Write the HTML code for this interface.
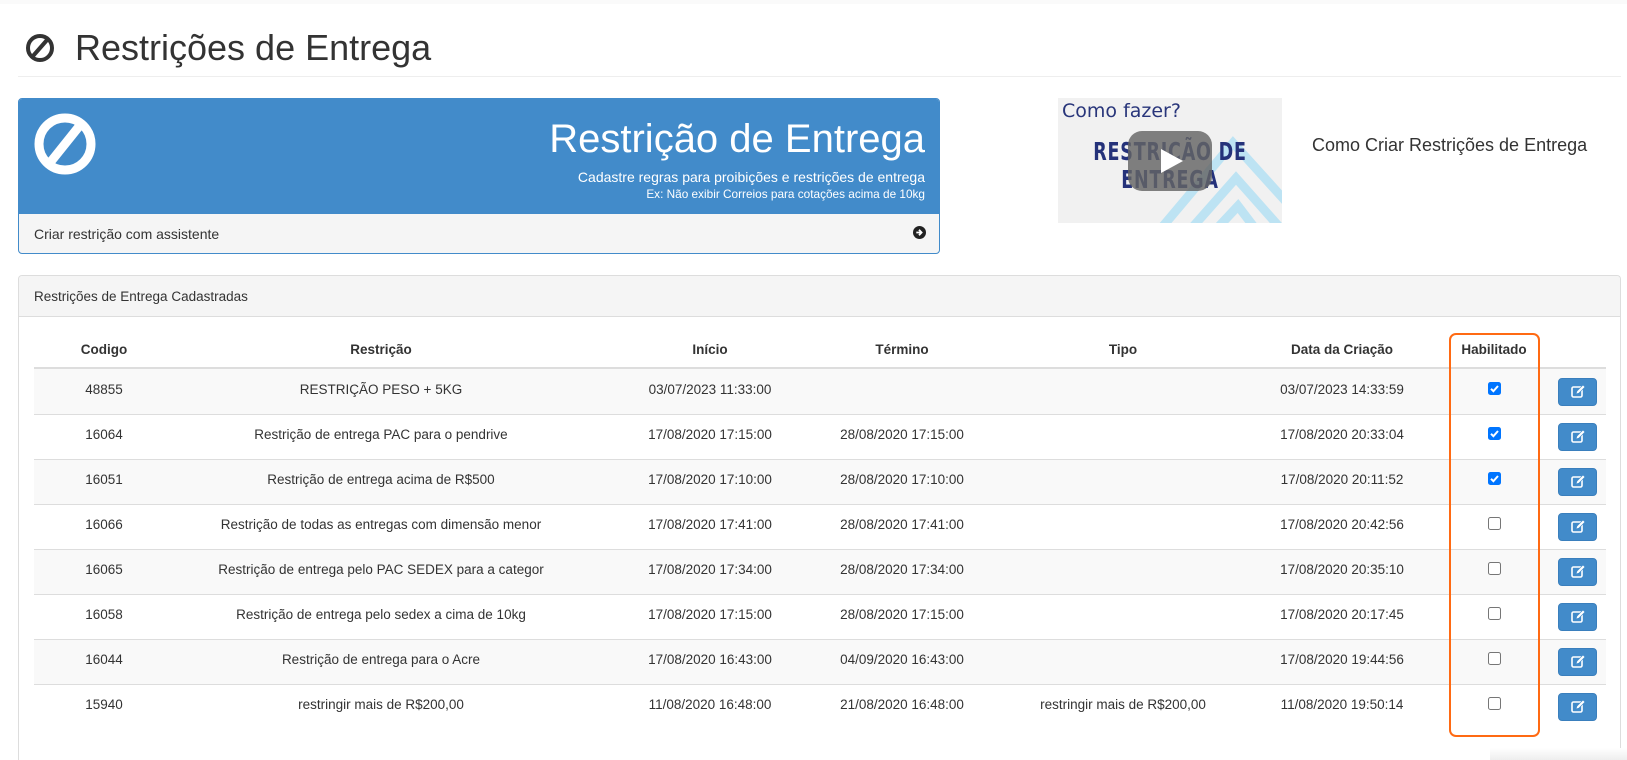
<!DOCTYPE html>
<html style="width:1627px;height:760px;overflow:hidden"><head><meta charset="utf-8"><style>
*{box-sizing:border-box;margin:0;padding:0}
body{width:1627px;height:760px;overflow:hidden;background:#fff;font-family:"Liberation Sans",Arial,sans-serif;color:#333;position:relative}
.a{position:absolute}
.c{position:absolute;width:400px;text-align:center;font-size:13.5px;white-space:nowrap}
.hd{font-weight:bold}
.row{position:absolute;left:34px;width:1572px;height:45px;border-top:1px solid #ddd}
.cb{position:absolute;left:1488px;width:13px;height:13px;border-radius:2.5px}
.cb.on{background:#0075ff}
.cb.off{border:1px solid #767676;background:#fff}
.btn{position:absolute;left:1558px;width:39px;height:28px;background:#428bca;border:1px solid #3a7fbd;border-radius:4px}
</style></head><body>
<div class="a" style="left:0;top:0;width:1627px;height:4px;background:#fafafa"></div>
<svg class="a" style="left:25px;top:33px" width="30" height="30" viewBox="0 0 30 30"><circle cx="15" cy="15" r="12" fill="none" stroke="#333" stroke-width="4"/><line x1="8" y1="23" x2="22" y2="7" stroke="#333" stroke-width="4"/></svg>
<div class="a" style="left:75px;top:27px;font-size:36px;color:#333">Restrições de Entrega</div>
<div class="a" style="left:18px;top:76px;width:1603px;height:1px;background:#eee"></div>

<div class="a" style="left:18px;top:98px;width:922px;height:156px;border:1px solid #428bca;border-radius:4px;overflow:hidden;background:#f5f5f5">
 <div class="a" style="left:0;top:0;width:922px;height:115px;background:#428bca"></div>
 <svg class="a" style="left:14px;top:13px" width="64" height="64" viewBox="0 0 64 64"><circle cx="32" cy="32" r="26" fill="none" stroke="#fff" stroke-width="9"/><line x1="16" y1="52" x2="48" y2="12" stroke="#fff" stroke-width="9"/></svg>
 <div class="a" style="right:14px;top:18px;font-size:40px;color:#fff;white-space:nowrap">Restrição de Entrega</div>
 <div class="a" style="right:14px;top:70px;font-size:14px;color:#fff;white-space:nowrap">Cadastre regras para proibições e restrições de entrega</div>
 <div class="a" style="right:14px;top:88px;font-size:11.8px;color:#fff;white-space:nowrap">Ex: Não exibir Correios para cotações acima de 10kg</div>
 <div class="a" style="left:15px;top:127px;font-size:14px;color:#333">Criar restrição com assistente</div>
 <svg class="a" style="left:894px;top:127px" width="13" height="13" viewBox="0 0 13 13"><circle cx="6.5" cy="6.5" r="6.5" fill="#222"/><path d="M3.3 6.5h5M6 3.8l2.6 2.7L6 9.2" stroke="#fff" stroke-width="1.8" fill="none"/></svg>
</div>

<div class="a" style="left:1058px;top:98px;width:224px;height:125px;background:#f1f1f1;overflow:hidden">
 <svg class="a" style="left:0;top:0" width="224" height="125"><g fill="none" stroke="#bde3f3" stroke-width="9"><path d="M95 140 L175 45 L270 150"/><path d="M125 140 L178 80 L240 150"/><path d="M150 140 L180 108 L212 150"/></g></svg>
 <div class="a" style="left:4px;top:2px;font-size:19px;color:#28357a;font-family:'DejaVu Sans',sans-serif">Como fazer?</div>
 <div class="a" style="left:0;width:224px;top:40px;text-align:center;font-size:25px;font-weight:bold;color:#25327a;font-family:'DejaVu Sans Condensed','DejaVu Sans',sans-serif;line-height:28px;transform:scaleX(.78);letter-spacing:1px">RESTRIÇÃO DE<br>ENTREGA</div>
 <div class="a" style="left:70px;top:33px;width:84px;height:60px;background:rgba(100,100,100,.82);border-radius:14px"></div>
 <svg class="a" style="left:70px;top:33px" width="84" height="60"><path d="M33 18 L55 30 L33 42Z" fill="#fff"/></svg>
</div>
<div class="a" style="left:1312px;top:135px;font-size:18px;color:#333">Como Criar Restrições de Entrega</div>

<div class="a" style="left:18px;top:275px;width:1603px;height:500px;border:1px solid #ddd;border-bottom:none;border-radius:4px 4px 0 0;overflow:hidden">
 <div class="a" style="left:0;top:0;width:1603px;height:41px;background:#f5f5f5;border-bottom:1px solid #ddd"></div>
 <div class="a" style="left:15px;top:13px;font-size:13.5px;color:#333">Restrições de Entrega Cadastradas</div>
</div>

<div class="a" style="left:34px;top:367px;width:1572px;height:2px;background:#ddd"></div>
<div class="c hd" style="left:-96px;top:342px">Codigo</div>
<div class="c hd" style="left:181px;top:342px">Restrição</div>
<div class="c hd" style="left:510px;top:342px">Início</div>
<div class="c hd" style="left:702px;top:342px">Término</div>
<div class="c hd" style="left:923px;top:342px">Tipo</div>
<div class="c hd" style="left:1142px;top:342px">Data da Criação</div>
<div class="c hd" style="left:1294px;top:342px">Habilitado</div>

<div class="row" style="top:369px;background:#f9f9f9;border-top:none"></div>
<div class="row" style="top:414px"></div>
<div class="row" style="top:459px;background:#f9f9f9"></div>
<div class="row" style="top:504px"></div>
<div class="row" style="top:549px;background:#f9f9f9"></div>
<div class="row" style="top:594px"></div>
<div class="row" style="top:639px;background:#f9f9f9"></div>
<div class="row" style="top:684px"></div>

<div class="c" style="left:-96px;top:382px">48855</div><div class="c" style="left:181px;top:382px">RESTRIÇÃO PESO + 5KG</div><div class="c" style="left:510px;top:382px">03/07/2023 11:33:00</div><div class="c" style="left:1142px;top:382px">03/07/2023 14:33:59</div>
<div class="c" style="left:-96px;top:427px">16064</div><div class="c" style="left:181px;top:427px">Restrição de entrega PAC para o pendrive</div><div class="c" style="left:510px;top:427px">17/08/2020 17:15:00</div><div class="c" style="left:702px;top:427px">28/08/2020 17:15:00</div><div class="c" style="left:1142px;top:427px">17/08/2020 20:33:04</div>
<div class="c" style="left:-96px;top:472px">16051</div><div class="c" style="left:181px;top:472px">Restrição de entrega acima de R$500</div><div class="c" style="left:510px;top:472px">17/08/2020 17:10:00</div><div class="c" style="left:702px;top:472px">28/08/2020 17:10:00</div><div class="c" style="left:1142px;top:472px">17/08/2020 20:11:52</div>
<div class="c" style="left:-96px;top:517px">16066</div><div class="c" style="left:181px;top:517px">Restrição de todas as entregas com dimensão menor</div><div class="c" style="left:510px;top:517px">17/08/2020 17:41:00</div><div class="c" style="left:702px;top:517px">28/08/2020 17:41:00</div><div class="c" style="left:1142px;top:517px">17/08/2020 20:42:56</div>
<div class="c" style="left:-96px;top:562px">16065</div><div class="c" style="left:181px;top:562px">Restrição de entrega pelo PAC SEDEX para a categor</div><div class="c" style="left:510px;top:562px">17/08/2020 17:34:00</div><div class="c" style="left:702px;top:562px">28/08/2020 17:34:00</div><div class="c" style="left:1142px;top:562px">17/08/2020 20:35:10</div>
<div class="c" style="left:-96px;top:607px">16058</div><div class="c" style="left:181px;top:607px">Restrição de entrega pelo sedex a cima de 10kg</div><div class="c" style="left:510px;top:607px">17/08/2020 17:15:00</div><div class="c" style="left:702px;top:607px">28/08/2020 17:15:00</div><div class="c" style="left:1142px;top:607px">17/08/2020 20:17:45</div>
<div class="c" style="left:-96px;top:652px">16044</div><div class="c" style="left:181px;top:652px">Restrição de entrega para o Acre</div><div class="c" style="left:510px;top:652px">17/08/2020 16:43:00</div><div class="c" style="left:702px;top:652px">04/09/2020 16:43:00</div><div class="c" style="left:1142px;top:652px">17/08/2020 19:44:56</div>
<div class="c" style="left:-96px;top:697px">15940</div><div class="c" style="left:181px;top:697px">restringir mais de R$200,00</div><div class="c" style="left:510px;top:697px">11/08/2020 16:48:00</div><div class="c" style="left:702px;top:697px">21/08/2020 16:48:00</div><div class="c" style="left:923px;top:697px">restringir mais de R$200,00</div><div class="c" style="left:1142px;top:697px">11/08/2020 19:50:14</div>

<svg width="0" height="0" style="position:absolute"><defs>
<symbol id="ck" viewBox="0 0 13 13"><path d="M3 6.8l2.4 2.4L10 4" stroke="#fff" stroke-width="2" fill="none"/></symbol>
<symbol id="ed" viewBox="0 0 39 28"><rect x="14" y="9" width="10" height="10" rx="1.5" fill="none" stroke="#fff" stroke-width="1.6"/><path d="M18 16l1-3 6-6 2 2-6 6z" fill="#fff" stroke="#428bca" stroke-width=".6"/></symbol>
</defs></svg>
<div class="cb on" style="top:382px"><svg width="13" height="13"><use href="#ck"/></svg></div>
<div class="cb on" style="top:427px"><svg width="13" height="13"><use href="#ck"/></svg></div>
<div class="cb on" style="top:472px"><svg width="13" height="13"><use href="#ck"/></svg></div>
<div class="cb off" style="top:517px"></div>
<div class="cb off" style="top:562px"></div>
<div class="cb off" style="top:607px"></div>
<div class="cb off" style="top:652px"></div>
<div class="cb off" style="top:697px"></div>

<div class="btn" style="top:378px"><svg width="39" height="28" style="margin:-1px"><use href="#ed"/></svg></div>
<div class="btn" style="top:423px"><svg width="39" height="28" style="margin:-1px"><use href="#ed"/></svg></div>
<div class="btn" style="top:468px"><svg width="39" height="28" style="margin:-1px"><use href="#ed"/></svg></div>
<div class="btn" style="top:513px"><svg width="39" height="28" style="margin:-1px"><use href="#ed"/></svg></div>
<div class="btn" style="top:558px"><svg width="39" height="28" style="margin:-1px"><use href="#ed"/></svg></div>
<div class="btn" style="top:603px"><svg width="39" height="28" style="margin:-1px"><use href="#ed"/></svg></div>
<div class="btn" style="top:648px"><svg width="39" height="28" style="margin:-1px"><use href="#ed"/></svg></div>
<div class="btn" style="top:693px"><svg width="39" height="28" style="margin:-1px"><use href="#ed"/></svg></div>

<div class="a" style="left:1449px;top:333px;width:91px;height:404px;border:2px solid #ff6a13;border-radius:7px"></div>
<div class="a" style="left:1490px;top:748px;width:137px;height:12px;background:linear-gradient(#fff,#eee)"></div>
</body></html>
